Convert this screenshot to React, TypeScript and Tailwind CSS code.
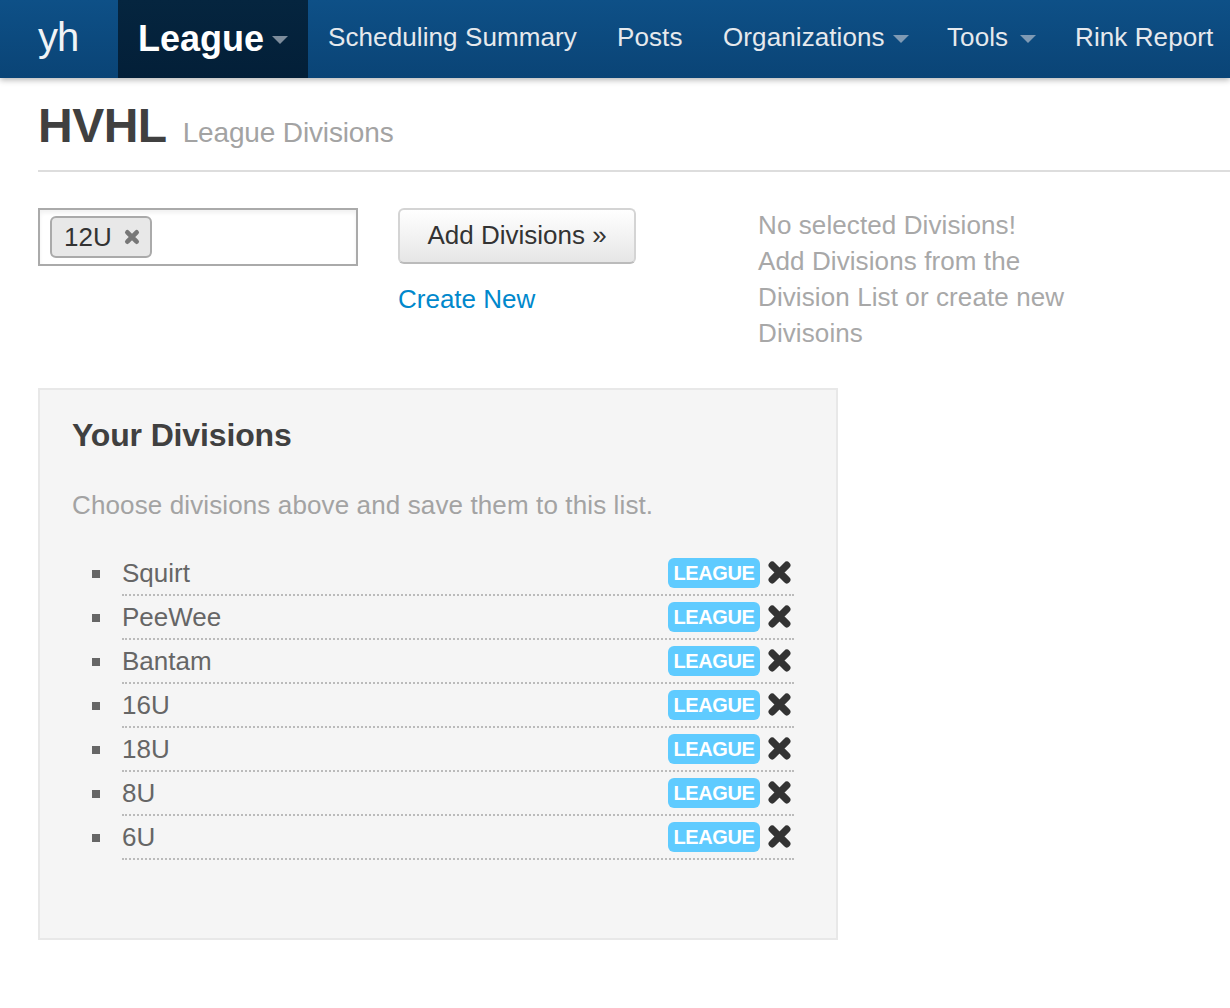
import { ReactNode } from "react";

const divisions = ["Squirt", "PeeWee", "Bantam", "16U", "18U", "8U", "6U"];

function Caret({ className }: { className: string }) {
  return (
    <span
      className={`inline-block w-0 h-0 border-x-[8px] border-x-transparent border-t-[8px] ${className}`}
    />
  );
}

function NavItem({ children, caret, width }: { children: ReactNode; caret?: string; width: string }) {
  return (
    <a className={`flex items-center h-full pl-5 pb-1 text-[26px] tracking-[0.1px] whitespace-nowrap text-[#e6e9ed] shrink-0 ${width}`}>
      {children}
      {caret && <Caret className={`${caret} mt-1 border-t-[#7f9ab4]`} />}
    </a>
  );
}

function CrossIcon({ className }: { className: string }) {
  return (
    <svg viewBox="0 0 24 24" className={className} aria-hidden="true">
      <path
        d="M5 5 L19 19 M19 5 L5 19"
        stroke="currentColor"
        strokeWidth="7"
        strokeLinecap="round"
        fill="none"
      />
    </svg>
  );
}

function DivisionRow({ name }: { name: string }) {
  return (
    <li className="relative flex items-center justify-between h-[44px] ml-[50px] border-b-2 border-dotted border-[#bbbbbb] text-[26px] text-[#666666]">
      <span className="absolute left-[-30px] top-[18px] w-2 h-2 bg-[#666666]" />
      <span>{name}</span>
      <span className="flex items-center">
        <span className="flex items-center justify-center w-[92px] h-[30px] rounded-[6px] bg-[#5fcbff] text-white text-[20px] font-bold tracking-[-0.4px]">
          LEAGUE
        </span>
        <CrossIcon className="w-[25px] h-[25px] ml-[7px] mr-0.5 -mt-0.5 text-[#333333]" />
      </span>
    </li>
  );
}

export default function App() {
  return (
    <div className="w-[1230px] h-[1008px] overflow-hidden bg-white font-['Liberation_Sans',Arial,sans-serif]">
      <nav className="flex h-[78px] bg-gradient-to-b from-[#0e5087] to-[#0a4476] shadow-[0_2px_6px_rgba(0,0,0,0.3)] overflow-hidden">
        <a className="flex items-center h-full w-[118px] pl-[38px] pb-1 text-[40px] font-light tracking-[-1px] text-[#f0f3f6] shrink-0">
          yh
        </a>
        <a className="flex items-center h-full w-[190px] pl-5 bg-gradient-to-b from-[#05253f] to-[#031f38] text-white text-[36px] font-bold shrink-0">
          League
          <Caret className="ml-2 mt-0.5 border-t-[#7d8c9b]" />
        </a>
        <NavItem width="w-[289px]">Scheduling Summary</NavItem>
        <NavItem width="w-[106px]">Posts</NavItem>
        <NavItem caret="ml-2" width="w-[224px]">Organizations</NavItem>
        <NavItem caret="ml-3" width="w-[128px]">Tools</NavItem>
        <NavItem width="w-[175px]">Rink Report</NavItem>
      </nav>

      <div className="pl-[38px]">
        <header className="flex items-baseline gap-4 h-[94px] pt-[18px] border-b-2 border-[#dddddd]">
          <h1 className="text-[48px] leading-[60px] font-bold tracking-[-0.5px] text-[#404040]">HVHL</h1>
          <span className="text-[28px] tracking-[-0.15px] text-[#a3a3a3]">League Divisions</span>
        </header>

        <section className="flex mt-9">
          <div className="w-[320px] h-[58px] flex items-center pl-[10px] border-2 border-[#aaaaaa] bg-white shadow-[inset_0_3px_4px_rgba(0,0,0,0.06)]">
            <span className="flex items-center w-[102px] h-[42px] pl-3 rounded-[6px] border-2 border-[#aaaaaa] bg-[#e8e8e8] text-[26px] text-[#333333]">
              12U
              <CrossIcon className="w-[16px] h-[16px] ml-3 text-[#777777]" />
            </span>
          </div>

          <div className="w-[238px] ml-10">
            <button className="w-full h-[56px] pb-0.5 rounded-[6px] border-2 border-[#d4d4d4] border-b-[#bbbbbb] bg-gradient-to-b from-white to-[#e6e6e6] text-[26px] text-[#333333]">
              Add Divisions »
            </button>
            <a className="block mt-[17px] text-[26px] leading-9 text-[#0088cc]">Create New</a>
          </div>

          <p className="w-[330px] ml-[122px] -mt-px text-[26px] leading-9 tracking-[0.1px] text-[#a8a8a8]">
            No selected Divisions!
            <br />
            Add Divisions from the
            <br />
            Division List or create new
            <br />
            Divisoins
          </p>
        </section>

        <section className="w-[800px] h-[552px] mt-[37px] pt-[25px] pl-[32px] pr-[42px] border-2 border-[#e8e8e8] bg-[#f5f5f5]">
          <h2 className="text-[32px] leading-10 font-bold tracking-[-0.15px] text-[#404040]">Your Divisions</h2>
          <p className="mt-[32px] text-[26px] leading-9 tracking-[0.12px] text-[#a3a3a3]">
            Choose divisions above and save them to this list.
          </p>
          <ul className="mt-[29px]">
            {divisions.map((name) => (
              <DivisionRow key={name} name={name} />
            ))}
          </ul>
        </section>
      </div>
    </div>
  );
}
